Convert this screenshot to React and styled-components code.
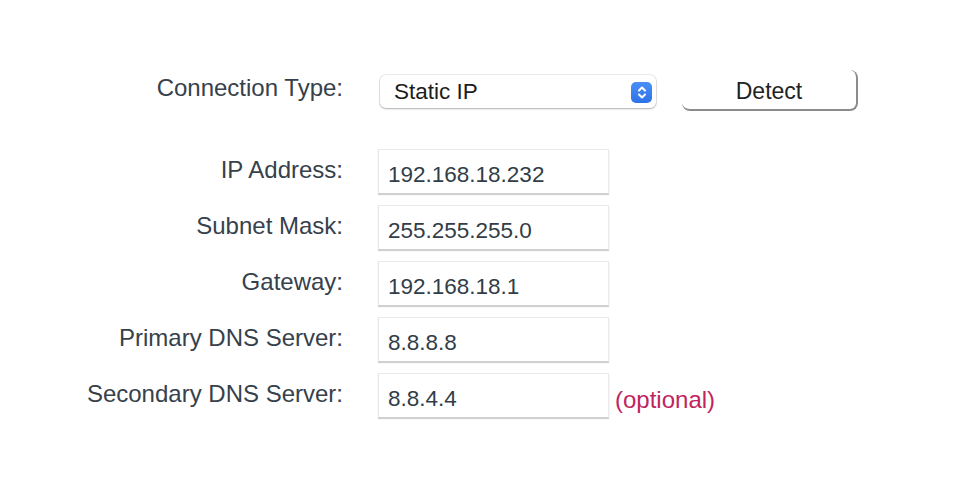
import React from 'react';
import styled, { createGlobalStyle } from 'styled-components';

const GlobalStyle = createGlobalStyle`
  html, body {
    margin: 0;
    padding: 0;
    background: #ffffff;
    font-family: "Liberation Sans", Arial, Helvetica, sans-serif;
  }
`;

const Form = styled.div`
  display: flex;
  flex-direction: column;
  padding-top: 70px;
`;

const TypeRow = styled.div`
  display: flex;
  align-items: flex-start;
  height: 41px;
  margin-bottom: 38px;
`;

const FieldRow = styled.div`
  display: flex;
  align-items: flex-start;
  height: 45px;
  margin-bottom: 11px;
`;

const Label = styled.div`
  width: 343px;
  flex-shrink: 0;
  text-align: right;
  font-size: 24px;
  line-height: 24px;
  color: #36414b;
  padding-top: ${p => p.$top}px;
  box-sizing: border-box;
`;

const SelectBox = styled.div`
  margin-left: 37px;
  margin-top: 5px;
  width: 276px;
  height: 33px;
  box-sizing: border-box;
  background: #fff;
  border-radius: 6px;
  box-shadow: 0 0 0 1px rgba(0, 0, 0, 0.07), 0 1px 2px rgba(0, 0, 0, 0.25);
  display: flex;
  align-items: center;
  justify-content: space-between;
  padding: 1px 4px 0 14px;
  font-size: 22.5px;
  color: #1c1c1c;
`;

const Stepper = styled.span`
  width: 21px;
  height: 21px;
  border-radius: 5px;
  background: linear-gradient(#4a8ef8, #2f72e8);
  display: flex;
  align-items: center;
  justify-content: center;
`;

const DetectButton = styled.button`
  margin-left: 26px;
  width: 176px;
  height: 41px;
  box-sizing: border-box;
  background: #fff;
  border: none;
  border-right: 2px solid #8c8c8c;
  border-bottom: 2px solid #8c8c8c;
  border-radius: 8px;
  font-family: inherit;
  font-size: 23px;
  color: #222;
  padding: 3px 0 0;
  cursor: pointer;
`;

const Input = styled.input`
  margin-left: 35px;
  width: 231px;
  height: 45px;
  box-sizing: border-box;
  border: 1px solid #e9e9e9;
  border-bottom-color: #cfcfcf;
  box-shadow: 0 1px 1px rgba(0, 0, 0, 0.18);
  padding: 6px 9px 0;
  font-family: inherit;
  font-size: 22.5px;
  color: #323d47;
  background: #fff;
  outline: none;
`;

const Hint = styled.span`
  margin-left: 6px;
  padding-top: 15px;
  font-size: 24px;
  line-height: 24px;
  color: #c0245e;
`;

const fields = [
  { label: 'IP Address:', value: '192.168.18.232' },
  { label: 'Subnet Mask:', value: '255.255.255.0' },
  { label: 'Gateway:', value: '192.168.18.1' },
  { label: 'Primary DNS Server:', value: '8.8.8.8' },
  { label: 'Secondary DNS Server:', value: '8.8.4.4', hint: '(optional)' },
];

const App = () => (
  <>
    <GlobalStyle />
    <Form>
      <TypeRow>
        <Label $top={6}>Connection Type:</Label>
        <SelectBox>
          <span>Static IP</span>
          <Stepper>
            <svg width="12" height="17" viewBox="0 0 12 17" fill="none" stroke="#fff" strokeWidth="2" strokeLinecap="round" strokeLinejoin="round">
              <path d="M3 6.5 L6 3.5 L9 6.5" />
              <path d="M3 10.5 L6 13.5 L9 10.5" />
            </svg>
          </Stepper>
        </SelectBox>
        <DetectButton>Detect</DetectButton>
      </TypeRow>
      {fields.map(f => (
        <FieldRow key={f.label}>
          <Label $top={9}>{f.label}</Label>
          <Input defaultValue={f.value} />
          {f.hint && <Hint>{f.hint}</Hint>}
        </FieldRow>
      ))}
    </Form>
  </>
);

export default App;
